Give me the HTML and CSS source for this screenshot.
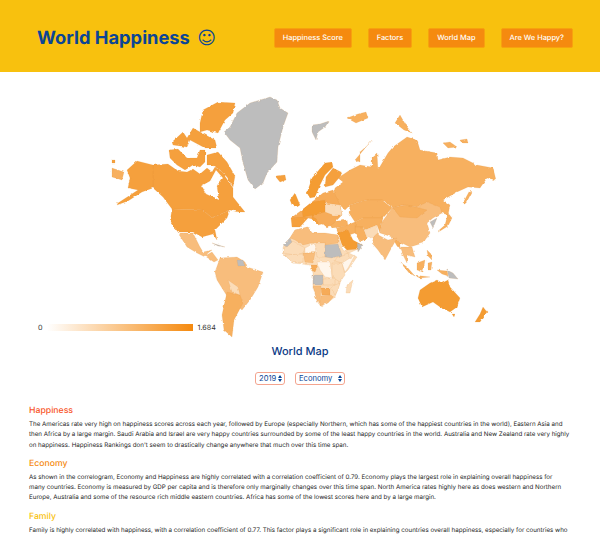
FILE: index.html
```html
<!DOCTYPE html>
<html>
  <head>
    <title>World Happiness</title>
    <link rel="stylesheet" href="styles.css">
  </head>
  <body>
    <header class="top-bar">
      <h1 class="site-title">World Happiness <span class="smile">&#9786;</span></h1>
      <nav class="nav-buttons">
        <a class="nav-button">Happiness Score</a>
        <a class="nav-button">Factors</a>
        <a class="nav-button">World Map</a>
        <a class="nav-button">Are We Happy?</a>
      </nav>
    </header>

    <div class="map-box">
      <svg class="world-map" viewBox="0 72 600 270" width="600" height="270">
        <!-- rough coastlines -->
        <filter id="rough" filterUnits="userSpaceOnUse" x="0" y="72" width="600" height="270">
          <feTurbulence type="fractalNoise" baseFrequency="0.22" numOctaves="2" seed="4"/>
          <feDisplacementMap in="SourceGraphic" scale="2.6" xChannelSelector="R" yChannelSelector="G"/>
        </filter>
        <g filter="url(#rough)">
          <!-- Greenland and the arctic without data -->
          <g class="no-data">
            <path d="M270 97 L250 103 L237 113 L230 127 L224 132 L230 140 L240 148 L243 163 L248 180 L255 189 L263 183 L267 173 L277 162 L278 147 L283 127 L288 113 L280 108 L277 100 Z"/>
            <path d="M312 125 L320 124 L329 121 L325 127 L318 132 L316 140 L312 132 Z"/>
            <path d="M212 243 L225 247 L218 246 Z"/>
          </g>

          <!-- North America -->
          <g class="level-6">
            <path d="M200 123 L203 110 L218 102 L235 103 L233 113 L225 120 L218 133 L207 130 L200 132 Z"/>
            <path d="M172 142 L183 132 L187 138 L193 128 L200 132 L215 140 L217 148 L205 148 L190 140 L187 147 L173 145 Z"/>
            <path d="M169 150 L178 149 L187 158 L197 158 L200 150 L205 150 L205 162 L200 167 L193 165 L185 170 L177 165 L170 158 Z"/>
            <path d="M207 155 L218 152 L227 162 L235 176 L233 187 L227 177 L220 170 L212 165 L207 165 Z"/>
            <path fill-rule="evenodd" d="M153 165 L168 164 L178 171 L187 172 L193 169 L200 174 L207 168 L212 172 L215 167 L222 172 L233 188 L233 197 L245 212 L238 212 L230 210 L212 218 L203 210 L172 209 L163 197 L153 188 Z M201 186 L210 181 L216 170 L223 178 L217 186 L219 200 L206 194 Z"/>
            <path d="M127 170 L137 161 L153 165 L153 188 L142 192 L128 201 L117 205 L118 203 L138 190 L128 188 L130 178 Z"/>
            <path d="M172 209 L203 210 L212 218 L230 210 L227 218 L215 230 L217 240 L213 234 L202 237 L193 232 L178 232 L170 222 Z"/>
            <path d="M112 160 L115 160 L115 163 L112 163 Z"/>
            <path d="M275 176 L285 175 L286 180 L280 182 Z"/>
          </g>
          <g class="level-4">
            <path d="M112 168 L124 172 L122 180 L112 177 Z"/>
          </g>

          <!-- Latin America -->
          <g class="level-3">
            <path d="M178 233 L193 233 L200 247 L203 252 L212 250 L208 253 L205 257 L197 253 L187 247 Z"/>
            <path d="M205 256 L212 252 L218 260 L214 262 Z"/>
            <path d="M220 258 L237 257 L245 262 L247 267 L263 272 L258 287 L250 300 L242 310 L227 296 L217 280 L215 272 Z"/>
          </g>
          <g class="level-4">
            <path d="M227 292 L240 295 L243 303 L234 320 L232 337 L224 330 L222 315 Z"/>
          </g>
          <g class="level-2">
            <path d="M228 280 L238 287 L240 295 L232 292 Z"/>
          </g>
          <g class="no-data">
            <path d="M237 260 L243 260 L245 266 L238 266 Z"/>
          </g>

          <!-- Russia, Central Asia and the north -->
          <g class="level-4">
            <path d="M332 200 L335 188 L343 182 L338 178 L350 170 L360 165 L372 167 L372 157 L377 153 L378 170 L385 158 L388 153 L393 147 L407 137 L417 140 L420 150 L437 153 L438 160 L450 157 L463 158 L477 165 L493 168 L496 180 L487 178 L480 188 L468 187 L457 192 L443 200 L450 205 L448 215 L442 213 L427 203 L417 207 L403 205 L393 208 L383 200 L367 200 L350 205 L345 210 L340 205 Z"/>
            <path d="M350 205 L367 200 L382 200 L392 208 L383 218 L375 218 L363 218 L355 222 L349 213 Z"/>
            <path d="M355 222 L363 218 L383 218 L382 222 L380 233 L377 225 L365 230 L363 227 L355 227 Z"/>
            <path d="M355 160 L372 140 L368 145 L360 152 L360 162 Z"/>
            <path d="M395 123 L400 115 L407 127 L412 133 L404 130 Z"/>
            <path d="M443 143 L450 142 L457 147 L448 148 Z"/>
            <path d="M463 203 L470 190 L472 192 L466 203 Z"/>
            <path d="M347 118 L358 114 L366 112 L368 118 L356 123 Z"/>
            <path d="M355 227 L363 227 L367 238 L360 242 L355 233 Z"/>
            <path d="M328 222 L347 220 L348 226 L332 228 Z"/>
            <path d="M336 228 L345 226 L355 222 L355 233 L346 236 L338 233 Z"/>
            <path d="M460 140 L467 139 L468 143 L461 143 Z"/>
            <path d="M392 237 L400 242 L400 247 L397 246 Z"/>
          </g>
          <g class="level-5">
            <path d="M291 218 L302 210 L312 202 L323 193 L333 190 L340 205 L342 215 L334 223 L327 228 L322 224 L318 225 L312 219 L308 218 Z"/>
          </g>
          <g class="level-3">
            <path d="M392 208 L403 205 L417 207 L427 202 L440 207 L442 213 L433 218 L427 223 L430 233 L423 243 L410 247 L400 242 L392 237 L380 233 L382 222 Z"/>
            <path d="M375 233 L382 237 L388 240 L397 238 L392 247 L385 260 L378 250 L372 243 Z"/>
            <path d="M400 247 L412 247 L415 257 L407 255 L407 263 L403 255 Z"/>
          </g>
          <g class="level-4">
            <path d="M393 208 L407 205 L427 210 L417 218 L400 217 Z"/>
            <path d="M437 232 L445 225 L448 213 L452 218 L448 226 L440 231 Z"/>
          </g>
          <g class="level-2">
            <path d="M365 230 L377 225 L378 233 L372 238 L366 236 Z"/>
            <path d="M325 203 L340 205 L342 215 L333 215 L325 212 Z"/>
            <path d="M345 250 L358 249 L347 254 Z"/>
          </g>

          <!-- Europe -->
          <g class="level-7">
            <path d="M307 193 L312 178 L325 163 L332 162 L333 167 L325 175 L320 185 L315 197 L310 198 Z"/>
            <path d="M290 200 L295 193 L300 205 L297 207 L292 205 Z"/>
            <path d="M302 210 L312 202 L325 200 L325 212 L313 215 L303 217 Z"/>
          </g>
          <g class="level-6">
            <path d="M291 218 L302 217 L308 218 L300 227 L292 227 Z"/>
            <path d="M333 168 L343 173 L333 185 L325 187 L326 177 Z"/>
            <path d="M312 215 L318 222 L318 225 L312 219 Z"/>
          </g>

          <!-- Saudi Arabia and Oceania -->
          <g class="level-7">
            <path d="M338 233 L348 230 L353 240 L362 245 L358 249 L347 250 L342 245 Z"/>
            <path d="M420 290 L430 283 L437 280 L442 283 L448 280 L450 287 L460 298 L457 307 L450 312 L440 307 L433 302 L422 307 L418 298 Z"/>
            <path d="M452 314 L455 314 L454 317 Z"/>
            <path d="M483 307 L487 312 L480 322 L475 322 L480 314 Z"/>
          </g>

          <!-- South East Asia -->
          <g class="level-4">
            <path d="M400 262 L407 267 L414 275 L410 274 Z"/>
            <path d="M413 275 L422 276 L430 277 L420 278 Z"/>
            <path d="M417 263 L425 260 L423 272 L417 270 Z"/>
            <path d="M428 263 L432 262 L431 270 L428 270 Z"/>
            <path d="M427 250 L431 254 L432 260 L428 256 Z"/>
            <path d="M437 270 L447 271 L448 276 L442 274 Z"/>
          </g>

          <!-- Africa -->
          <g class="level-2">
            <path d="M283 247 L290 238 L295 230 L308 227 L312 233 L338 235 L343 250 L357 257 L348 270 L343 275 L335 297 L322 307 L318 303 L313 287 L313 273 L310 265 L293 263 L283 253 Z"/>
          </g>
          <g class="level-3">
            <path d="M290 238 L295 230 L308 227 L312 233 L325 233 L338 235 L338 243 L325 245 L312 243 L303 245 L295 240 Z"/>
            <path d="M303 253 L315 253 L313 263 L305 262 Z"/>
            <path d="M313 286 L321 286 L320 303 L317 301 Z"/>
            <path d="M320 303 L321 296 L330 295 L334 296 L328 303 L320 306 Z"/>
          </g>
          <g class="level-5">
            <path d="M321 288 L330 288 L330 295 L322 295 Z"/>
            <path d="M310 265 L318 265 L315 272 L311 270 Z"/>
          </g>
          <g class="level-2">
            <path d="M285 247 L293 241 L305 248 L303 253 L295 255 L283 253 Z"/>
            <path d="M315 243 L325 243 L325 257 L317 257 Z"/>
            <path d="M337 257 L348 253 L350 262 L342 263 L335 261 Z"/>
            <path d="M285 255 L303 254 L303 262 L292 263 Z"/>
            <path d="M332 263 L342 263 L345 275 L340 282 L332 277 Z"/>
            <path d="M323 279 L335 278 L335 285 L323 285 Z"/>
            <path d="M335 285 L340 283 L338 290 L335 295 L331 288 Z"/>
            <path d="M347 285 L353 280 L350 293 L346 293 Z"/>
          </g>
          <g class="level-1">
            <path d="M305 248 L315 243 L317 252 L305 253 Z"/>
            <path d="M317 262 L330 262 L332 278 L325 277 L320 270 Z"/>
            <path d="M342 263 L355 255 L348 268 L345 272 Z"/>
          </g>
          <g class="no-data">
            <path d="M283 245 L290 238 L292 242 L287 247 Z"/>
            <path d="M325 245 L338 244 L342 255 L332 258 L325 257 Z"/>
            <path d="M313 275 L323 275 L323 285 L313 285 Z"/>
            <path d="M447 270 L453 273 L458 279 L449 278 Z"/>
            <path d="M430 222 L437 218 L433 228 Z"/>
            <path d="M357 243 L363 245 L358 252 Z"/>
          </g>
        </g>
      </svg>
      <div class="legend">
        <span>0</span>
        <div class="legend-bar"></div>
        <span>1.684</span>
      </div>
    </div>

    <h2 class="map-title">World Map</h2>

    <div class="selects">
      <div class="picker-wrap">
        <select class="picker"><option>2019</option></select>
      </div>
      <div class="picker-wrap">
        <select class="picker picker-wide"><option>Economy</option></select>
      </div>
    </div>

    <section class="notes">
      <h3 class="note-title happiness">Happiness</h3>
      <p>The Americas rate very high on happiness scores across each year, followed by Europe (especially Northern, which has some of the happiest countries in the world), Eastern Asia and<br>then Africa by a large margin. Saudi Arabia and Israel are very happy countries surrounded by some of the least happy countries in the world. Australia and New Zealand rate very highly<br>on happiness. Happiness Rankings don't seem to drastically change anywhere that much over this time span.</p>
      <h3 class="note-title economy">Economy</h3>
      <p>As shown in the correlogram, Economy and Happiness are highly correlated with a correlation coefficient of 0.79. Economy plays the largest role in explaining overall happiness for<br>many countries. Economy is measured by GDP per capita and is therefore only marginally changes over this time span. North America rates highly here as does western and Northern<br>Europe, Australia and some of the resource rich middle eastern countries. Africa has some of the lowest scores here and by a large margin.</p>
      <h3 class="note-title family">Family</h3>
      <p>Family is highly correlated with happiness, with a correlation coefficient of 0.77. This factor plays a significant role in explaining countries overall happiness, especially for countries who<br>do not rank highly on Economy. These countries are mostly in South America and the rest of the developing world, which is why this factor is worth a look in the 2019 data.</p>
    </section>
  </body>
</html>
```

FILE: styles.css
```css
html,
body {
  margin: 0;
  padding: 0;
  height: 536px;
  overflow: hidden;
}

body {
  font-family: Inter, Arial, sans-serif;
  text-rendering: geometricPrecision;
  background-color: #fff;
  color: #222;
}

.top-bar {
  display: flex;
  align-items: center;
  justify-content: space-between;
  height: 72px;
  padding: 4px 27px 0 37px;
  box-sizing: border-box;
  background-color: #f8c10e;
}

.site-title {
  margin: 0;
  font-size: 18.3px;
  font-weight: 700;
  color: #0b4595;
}

.smile {
  margin-left: 3px;
  font-family: "DejaVu Sans", sans-serif;
  font-size: 18px;
  font-weight: normal;
}

.nav-buttons {
  display: flex;
  gap: 16px;
}

.nav-button {
  padding: 4px 8px;
  border: 1px solid #f7a20e;
  border-radius: 2px;
  background-color: #f58a0f;
  color: #fff;
  font-size: 7.4px;
  line-height: 10px;
  font-weight: 500;
}

.map-box {
  position: relative;
  height: 270px;
}

.world-map {
  display: block;
}

.world-map path {
  stroke: #d98a35;
  stroke-opacity: 0.35;
  stroke-width: 0.4;
}

.level-7 { fill: #f49c33; }
.level-6 { fill: #f5a03d; }
.level-5 { fill: #f6ab58; }
.level-4 { fill: #f7b05f; }
.level-3 { fill: #f8bd7c; }
.level-2 { fill: #fbdcb8; }
.level-1 { fill: #fff6ec; }
.no-data { fill: #bdbdbd; }

.legend {
  position: absolute;
  left: 38px;
  top: 251px;
  display: flex;
  align-items: center;
  gap: 4.5px;
  font-size: 7.2px;
  color: #333;
}

.legend-bar {
  width: 146px;
  height: 7px;
  background: linear-gradient(to right, #fff, #f58a0f);
}

.map-title {
  margin: 2px 0 0;
  text-align: center;
  font-size: 11px;
  line-height: 14px;
  font-weight: 500;
  color: #0b3a86;
}

.selects {
  display: flex;
  justify-content: center;
  gap: 10px;
  margin-top: 14px;
}

.picker-wrap {
  position: relative;
  height: 13px;
}

/* setas do select */
.picker-wrap::before,
.picker-wrap::after {
  content: "";
  position: absolute;
  right: 3px;
  border-left: 2px solid transparent;
  border-right: 2px solid transparent;
  pointer-events: none;
}

.picker-wrap::before {
  top: 3px;
  border-bottom: 3px solid #0b4595;
}

.picker-wrap::after {
  top: 7px;
  border-top: 3px solid #0b4595;
}

.picker {
  appearance: none;
  display: block;
  width: 30px;
  height: 13px;
  padding: 0 0 0 3px;
  border: 1px solid #f4a48e;
  border-radius: 3px;
  background-color: #fff;
  color: #0b4595;
  font-family: Inter, Arial, sans-serif;
  font-size: 7.6px;
}

.picker-wide {
  width: 50px;
}

.notes {
  margin-top: 20px;
  padding: 0 29px;
}

.notes p {
  margin: 0 0 7px;
  font-size: 6.2px;
  line-height: 10.3px;
}

.note-title {
  margin: 0 0 2px;
  font-size: 8.7px;
  line-height: 13px;
  font-weight: 500;
}

.happiness { color: #f8562a; }
.economy { color: #f58a0f; }
.family { color: #f8c10e; }
```
